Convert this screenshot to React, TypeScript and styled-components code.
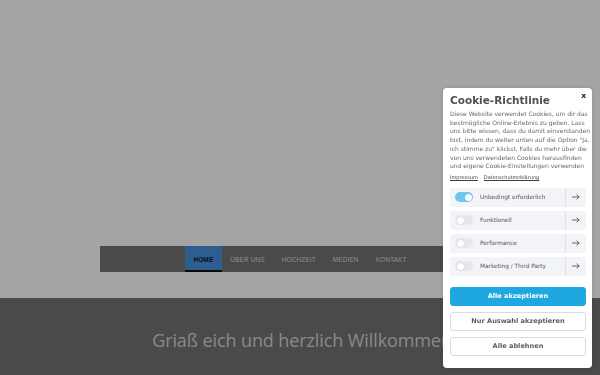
import React from "react";
import styled, { createGlobalStyle } from "styled-components";

const Global = createGlobalStyle`
  html, body { margin: 0; padding: 0; background: #fff; }
  body { font-family: "DejaVu Sans", sans-serif; overflow: hidden; }
  * { box-sizing: border-box; }
`;

const Page = styled.div`
  width: 600px;
  height: 375px;
  display: flex;
  flex-direction: column;
  background: #fff;
`;

const Hero = styled.div`
  height: 298px;
  display: flex;
  flex-direction: column;
  justify-content: flex-end;
  align-items: center;
  padding-bottom: 26px;
`;

const NavBar = styled.nav`
  width: 400px;
  height: 26px;
  background: #737373;
  display: flex;
  justify-content: center;
`;

const NavItem = styled.a<{ $active?: boolean }>`
  display: flex;
  align-items: center;
  padding: 2px 8.5px 0;
  height: 100%;
  font-family: "Liberation Sans", Arial, sans-serif;
  font-size: 6.5px;
  font-weight: ${(p) => (p.$active ? 700 : 400)};
  letter-spacing: 0.1px;
  color: ${(p) => (p.$active ? "#0a1a2e" : "#dcdcdc")};
  background: ${(p) => (p.$active ? "#4693dd" : "transparent")};
  border-bottom: 2px solid ${(p) => (p.$active ? "#111" : "transparent")};
`;

const Welcome = styled.section`
  flex: 1;
  background: #737373;
  display: flex;
  justify-content: center;
  padding-top: 30px;
  padding-left: 4px;
`;

const WelcomeText = styled.h1`
  margin: 0;
  font-family: "Open Sans", sans-serif;
  font-weight: 400;
  font-size: 18px;
  color: #d6d6d6;
  letter-spacing: -0.1px;
`;

const Overlay = styled.div`
  position: fixed;
  inset: 0;
  background: rgba(0, 0, 0, 0.357);
`;

const Modal = styled.div`
  position: fixed;
  top: 88px;
  right: 8px;
  width: 149px;
  height: 280px;
  background: #fff;
  border-radius: 4px;
  padding: 5px 6px 0 7px;
  display: flex;
  flex-direction: column;
  box-shadow: 0 0 4px rgba(0, 0, 0, 0.15);
`;

const Close = styled.span`
  position: absolute;
  top: 3px;
  right: 6px;
  font-size: 7.5px;
  font-weight: 700;
  color: #222;
`;

const Title = styled.h2`
  margin: 0;
  font-size: 10.5px;
  font-weight: 700;
  color: #4b4f56;
  line-height: 14px;
  white-space: nowrap;
`;

const Text = styled.p`
  margin: 3px 0 0;
  font-size: 6px;
  line-height: 8.7px;
  color: #666970;
  white-space: nowrap;
`;

const Links = styled.div`
  display: flex;
  gap: 6px;
  margin-top: 2px;
`;

const LinkText = styled.a`
  font-size: 5px;
  color: #3d4047;
  text-decoration: underline;
  line-height: 9px;
`;

const Rows = styled.div`
  display: flex;
  flex-direction: column;
  gap: 4px;
  margin-top: 6px;
`;

const Row = styled.div`
  height: 19px;
  background: #f3f4f8;
  border-radius: 3px;
  display: flex;
  align-items: center;
`;

const Toggle = styled.span<{ $on?: boolean }>`
  width: 18px;
  height: 10px;
  border-radius: 5px;
  margin: 0 7px 0 5px;
  background: ${(p) => (p.$on ? "#6dc6ee" : "#e6e7ec")};
  position: relative;
  flex-shrink: 0;
  &::after {
    content: "";
    position: absolute;
    top: 1.5px;
    left: ${(p) => (p.$on ? "9.5px" : "1.5px")};
    width: 7px;
    height: 7px;
    border-radius: 50%;
    background: #fff;
    box-shadow: 0 0 1px rgba(0, 0, 0, 0.2);
  }
`;

const RowLabel = styled.span`
  flex: 1;
  font-size: 5.8px;
  color: #50535a;
  white-space: nowrap;
`;

const ArrowBox = styled.span`
  width: 21px;
  height: 100%;
  border-left: 1px solid #dfe0e5;
  display: flex;
  align-items: center;
  justify-content: center;
  color: #444;
`;

const Buttons = styled.div`
  display: flex;
  flex-direction: column;
  gap: 6px;
  margin-top: 11px;
`;

const Button = styled.button<{ $primary?: boolean }>`
  height: 19px;
  border-radius: 3px;
  font-family: "DejaVu Sans", sans-serif;
  font-size: 6.6px;
  font-weight: 700;
  padding: 0;
  cursor: pointer;
  background: ${(p) => (p.$primary ? "#1ea7e1" : "#fff")};
  color: ${(p) => (p.$primary ? "#fff" : "#5a5d64")};
  border: 1px solid ${(p) => (p.$primary ? "#1ea7e1" : "#d8dbe3")};
`;

const Arrow = () => (
  <svg width="8" height="6" viewBox="0 0 8 6" fill="none" stroke="currentColor" strokeWidth="0.8">
    <path d="M0 3h7.2M4.6 0.6L7.2 3 4.6 5.4" />
  </svg>
);

const categories = [
  { label: "Unbedingt erforderlich", on: true },
  { label: "Funktionell", on: false },
  { label: "Performance", on: false },
  { label: "Marketing / Third Party", on: false },
];

const lines = [
  "Diese Website verwendet Cookies, um dir das",
  "bestmögliche Online-Erlebnis zu geben. Lass",
  "uns bitte wissen, dass du damit einverstanden",
  "bist, indem du weiter unten auf die Option \"Ja,",
  "ich stimme zu\" klickst. Falls du mehr über die",
  "von uns verwendeten Cookies herausfinden",
  "und eigene Cookie-Einstellungen verwenden",
];

export default function App() {
  return (
    <>
      <Global />
      <Page>
        <Hero>
          <NavBar>
            <NavItem $active>HOME</NavItem>
            <NavItem>ÜBER UNS</NavItem>
            <NavItem>HOCHZEIT</NavItem>
            <NavItem>MEDIEN</NavItem>
            <NavItem>KONTAKT</NavItem>
          </NavBar>
        </Hero>
        <Welcome>
          <WelcomeText>Griaß eich und herzlich Willkommen</WelcomeText>
        </Welcome>
      </Page>
      <Overlay />
      <Modal>
        <Close>x</Close>
        <Title>Cookie-Richtlinie</Title>
        <Text>
          {lines.map((l, i) => (
            <React.Fragment key={i}>
              {l}
              {i < lines.length - 1 && <br />}
            </React.Fragment>
          ))}
        </Text>
        <Links>
          <LinkText>Impressum</LinkText>
          <LinkText>Datenschutzerklärung</LinkText>
        </Links>
        <Rows>
          {categories.map((c) => (
            <Row key={c.label}>
              <Toggle $on={c.on} />
              <RowLabel>{c.label}</RowLabel>
              <ArrowBox>
                <Arrow />
              </ArrowBox>
            </Row>
          ))}
        </Rows>
        <Buttons>
          <Button $primary>Alle akzeptieren</Button>
          <Button>Nur Auswahl akzeptieren</Button>
          <Button>Alle ablehnen</Button>
        </Buttons>
      </Modal>
    </>
  );
}
